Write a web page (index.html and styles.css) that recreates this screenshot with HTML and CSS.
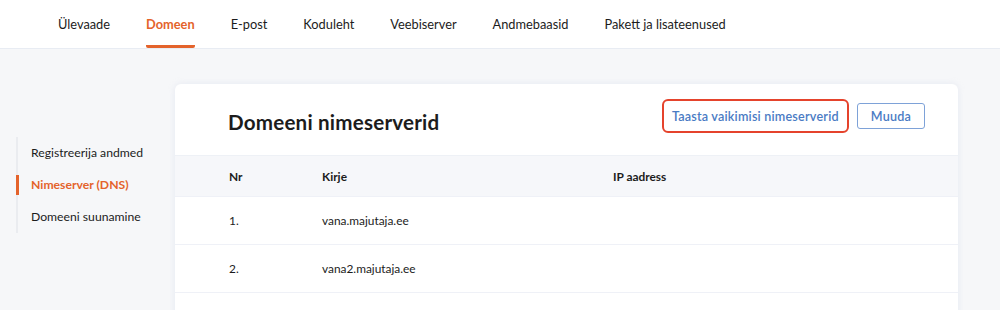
FILE: index.html
```html
<!DOCTYPE html>
<html lang="et">
<head>
  <meta charset="UTF-8">
  <title>Domeeni nimeserverid</title>
  <link rel="stylesheet" href="styles.css">
</head>
<body>
<div class="topbar">
  <nav class="tabs">
    <a class="tab">Ülevaade</a>
    <a class="tab active">Domeen</a>
    <a class="tab">E-post</a>
    <a class="tab">Koduleht</a>
    <a class="tab">Veebiserver</a>
    <a class="tab">Andmebaasid</a>
    <a class="tab">Pakett ja lisateenused</a>
  </nav>
</div>

<div class="page">
  <ul class="sidemenu">
    <li class="sideItem">Registreerija andmed</li>
    <li class="sideItem active">Nimeserver (DNS)</li>
    <li class="sideItem">Domeeni suunamine</li>
  </ul>

  <div class="card">
    <div class="cardHeader">
      <h1>Domeeni nimeserverid</h1>
      <div class="actions">
        <button type="button" class="btn btnHighlight">Taasta vaikimisi nimeserverid</button>
        <button type="button" class="btn">Muuda</button>
      </div>
    </div>

    <div class="row headRow">
      <span>Nr</span>
      <span>Kirje</span>
      <span>IP aadress</span>
    </div>
    <div class="row">
      <span>1.</span>
      <span>vana.majutaja.ee</span>
      <span></span>
    </div>
    <div class="row">
      <span>2.</span>
      <span>vana2.majutaja.ee</span>
      <span></span>
    </div>
    <div class="cardFooter">
      <span class="addLink">Lisa nimeserver</span>
    </div>
  </div>
</div>
</body>
</html>
```

FILE: styles.css
```css
body {
  margin: 0;
  background: #f6f7f9;
  font-family: Lato, "Noto Sans", sans-serif;
  color: #1c1c1c;
  overflow: hidden;
}

.topbar {
  background: #fff;
  height: 48px;
  border-bottom: 1px solid #e8ecf3;
}

.tabs {
  display: flex;
  gap: 36px;
  padding-left: 58px;
  height: 100%;
}

.tab {
  display: flex;
  align-items: center;
  font-size: 12.8px;
  padding-top: 2px;
  border-bottom: 3px solid transparent;
  box-sizing: border-box;
  border-radius: 2px;
}

.tab.active {
  color: #e4632b;
  font-weight: 700;
  border-bottom-color: #e4632b;
}

.page {
  display: flex;
  padding: 35px 42px 0 16px;
}

.sidemenu {
  list-style: none;
  margin: 53px 0 0;
  padding: 0;
  width: 157px;
  flex-shrink: 0;
  align-self: flex-start;
  border-left: 2px solid #eaecf0;
}

.sideItem {
  font-size: 12.2px;
  padding: 0 0 0 13px;
  height: 32px;
  line-height: 32px;
  margin-left: -2px;
  border-left: 2px solid transparent;
}

.sideItem.active {
  color: #e4632b;
  font-weight: 700;
  border-left: 3px solid #e4632b;
  height: 20px;
  line-height: 20px;
  margin: 6px 0 6px -2px;
  padding-left: 12px;
}

.card {
  flex: 1;
  background: #fff;
  border-radius: 6px;
  box-shadow: 0 0 6px rgba(200, 210, 230, 0.35);
  overflow: hidden;
}

.cardHeader {
  display: flex;
  justify-content: space-between;
  align-items: center;
  height: 72px;
  padding: 0 33px 0 53px;
  border-bottom: 1px solid #eef1f6;
  box-sizing: border-box;
}

h1 {
  font-size: 20.6px;
  font-weight: 700;
  margin: 4px 0 0;
  letter-spacing: 0.2px;
}

.actions {
  display: flex;
  align-items: center;
  gap: 8px;
  margin-top: -7px;
}

.btn {
  font-family: inherit;
  font-size: 12.6px;
  font-weight: 600;
  color: #4a7bc4;
  background: #fff;
  border: 1px solid #7ea2d8;
  border-radius: 3px;
  height: 26px;
  padding: 0 13px;
  letter-spacing: 0.2px;
}

.btnHighlight {
  border: 2px solid #e5432c;
  border-radius: 6px;
  height: 34px;
  padding: 0 8px;
}

.row {
  display: grid;
  grid-template-columns: 93px 291px 1fr;
  align-items: center;
  height: 47px;
  padding-left: 54px;
  font-size: 11.9px;
  border-bottom: 1px solid #eff1f7;
}

.headRow {
  background: #f6f7fa;
  font-weight: 700;
  height: 40px;
}

.cardFooter {
  display: flex;
  justify-content: center;
  padding: 16px 0 20px;
}

.addLink {
  font-size: 12px;
  color: #4a7bc4;
}
```
